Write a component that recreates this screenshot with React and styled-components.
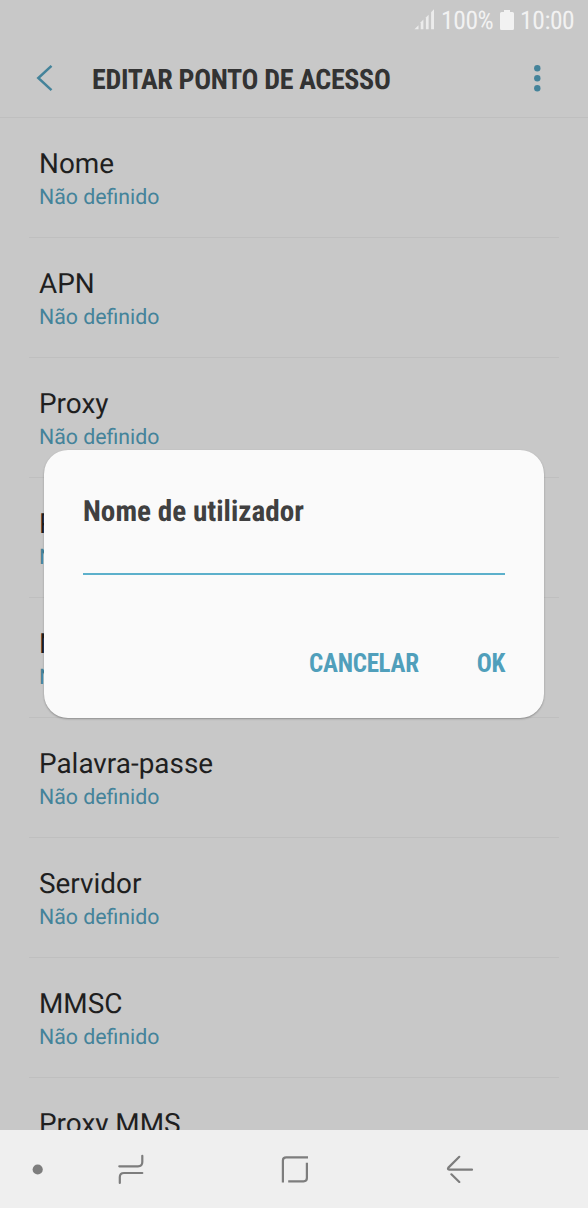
import React from "react";
import styled, { createGlobalStyle, css } from "styled-components";

const colors = {
  dim: "#c8c8c8",
  line: "#bfbfbf",
  teal: "#44839a",
  blue: "#509fbb",
  text: "#1f1f1f",
  nav: "#efefef",
  icon: "#7d7d7d",
};

const GlobalStyle = createGlobalStyle`
  * {
    box-sizing: border-box;
  }

  body {
    margin: 0;
    font-family: Roboto, "Liberation Sans", sans-serif;
    text-rendering: geometricPrecision;
  }
`;

const condensed = css`
  font-family: "Roboto Condensed", Roboto, sans-serif;
  font-stretch: 75%;
  white-space: nowrap;
`;

const Screen = styled.div`
  position: relative;
  display: flex;
  flex-direction: column;
  width: 588px;
  height: 1208px;
  overflow: hidden;
  background: ${colors.dim};
`;

const StatusBar = styled.div`
  ${condensed}
  display: flex;
  justify-content: flex-end;
  align-items: center;
  flex: none;
  height: 40px;
  padding-right: 13px;
  font-size: 25.5px;
  line-height: 40px;
  color: #f2f2f2;

  svg {
    flex: none;
  }
`;

const StatusText = styled.span`
  width: ${(props) => props.$width}px;
  margin-top: 1px;
  margin-left: 6px;
  letter-spacing: ${(props) => props.$spacing}px;
`;

const Header = styled.header`
  display: flex;
  align-items: center;
  flex: none;
  height: 78px;
  padding: 0 45px 0 36px;
  border-bottom: 1px solid ${colors.line};

  svg {
    margin-bottom: 1px;
  }
`;

const Title = styled.h1`
  ${condensed}
  flex: 1;
  margin: 2px 0 0 38px;
  font-size: 28px;
  font-weight: 700;
  line-height: 36px;
  letter-spacing: -0.34px;
  color: #333;
`;

const List = styled.ul`
  flex: 1;
  min-height: 0;
  margin: 0 29px;
  padding: 0;
  overflow: hidden;
  list-style: none;
`;

const Row = styled.li`
  height: 120px;
  padding: 29px 10px 0;
  border-bottom: 1px solid ${colors.line};
`;

const Label = styled.div`
  font-size: 27.9px;
  line-height: 34px;
  color: ${colors.text};
`;

const Value = styled.div`
  font-size: 21.3px;
  line-height: 34px;
  color: ${colors.teal};
`;

const Dialog = styled.div`
  position: absolute;
  top: 450px;
  left: 44px;
  display: flex;
  flex-direction: column;
  width: 500px;
  height: 268px;
  padding: 44px 39px 0;
  border-radius: 24px;
  background: #fafafa;
  box-shadow: 0 1px 2px rgba(0, 0, 0, 0.3);
`;

const DialogTitle = styled.h2`
  ${condensed}
  margin: 0;
  font-size: 29.2px;
  font-weight: 700;
  line-height: 36px;
  color: #404040;
`;

const Input = styled.input`
  width: 422px;
  height: 45px;
  padding: 0;
  border: 0;
  border-bottom: 2px solid #5cb0cb;
  background: transparent;
  font-size: 26px;
  outline: none;
`;

const Actions = styled.div`
  display: flex;
  justify-content: flex-end;
  gap: 58px;
  margin-top: 71px;
`;

const Action = styled.button`
  ${condensed}
  padding: 0;
  border: 0;
  background: none;
  font-size: 25px;
  font-weight: 700;
  line-height: 36px;
  letter-spacing: -0.3px;
  color: ${colors.blue};
`;

const NavBar = styled.nav`
  flex: none;
  height: 78px;
  background: ${colors.nav};

  svg {
    display: block;
  }
`;

const NavItems = styled.div`
  display: flex;
  align-items: center;
  height: 100%;
  padding: 0 114px 0 32px;
`;

const NavSlot = styled.div`
  margin-left: ${(props) => props.$gap}px;
`;

const strokeProps = {
  fill: "none",
  stroke: colors.icon,
  strokeWidth: 2.2,
  strokeLinecap: "round",
  strokeLinejoin: "round",
};

const rows = [
  "Nome",
  "APN",
  "Proxy",
  "Porta",
  "Nome de utilizador",
  "Palavra-passe",
  "Servidor",
  "MMSC",
  "Proxy MMS",
];

const SignalIcon = () => (
  <svg width="21" height="22" viewBox="0 0 21 22" fill="#ececec">
    <path d="M0.5 20.3 L4.5 16.3 V20.3 Z" />
    <path d="M6.7 20.3 V13.3 L9.4 10.6 V20.3 Z" />
    <path d="M11.9 20.3 V8.5 L14.6 5.8 V20.3 Z" />
    <path d="M17.1 20.3 V3.2 L20 0.3 V20.3 Z" />
  </svg>
);

const BatteryIcon = () => (
  <svg width="14" height="20" viewBox="0 0 14 20" fill="#f2f2f2">
    <path d="M4 0 H10 V2 H12.5 Q14 2 14 3.5 V18.5 Q14 20 12.5 20 H1.5 Q0 20 0 18.5 V3.5 Q0 2 1.5 2 H4 Z" />
  </svg>
);

const BackIcon = () => (
  <svg width="18" height="28" viewBox="0 0 18 28">
    <path d="M15.5 1.8 L2.3 14 L15.5 26.2" fill="none" stroke={colors.teal} strokeWidth="2.5" />
  </svg>
);

const MoreIcon = () => (
  <svg width="12" height="28" viewBox="0 0 12 28" fill={colors.teal}>
    <circle cx="6.3" cy="4.3" r="3.2" />
    <circle cx="6.3" cy="14.3" r="3.2" />
    <circle cx="6.3" cy="24.2" r="3.2" />
  </svg>
);

const DotIcon = () => (
  <svg width="12" height="12" viewBox="0 0 12 12">
    <circle cx="5.7" cy="6.5" r="5.1" fill={colors.icon} />
  </svg>
);

const RecentsIcon = () => (
  <svg width="28" height="32" viewBox="0 0 28 32" {...strokeProps}>
    <path d="M2.3 13.3 H21 Q25.3 13.3 25.3 9 V2.8" />
    <path d="M25.3 20 H7 Q2.8 20 2.8 24.3 V30" />
  </svg>
);

const HomeIcon = () => (
  <svg width="28" height="28" viewBox="0 0 28 28" {...strokeProps} strokeLinecap="butt">
    <path d="M1.9 27.6 V5.5 Q1.9 2.3 5.2 2.3 H27" />
    <path d="M25.9 7.8 V23 Q25.9 26.3 22.6 26.3 H7.2" />
  </svg>
);

const ReturnIcon = () => (
  <svg width="28" height="28" viewBox="0 0 28 28" {...strokeProps}>
    <path d="M13.3 1.8 L2.4 12.6 Q1.2 14.3 3.3 14.7 H26" />
    <path d="M5.4 19.3 L13.3 27" />
  </svg>
);

export default function App() {
  return (
    <Screen>
      <GlobalStyle />
      <StatusBar>
        <SignalIcon />
        <StatusText $width={59} $spacing={-0.4}>100%</StatusText>
        <BatteryIcon />
        <StatusText $width={55} $spacing={-0.4}>10:00</StatusText>
      </StatusBar>
      <Header>
        <BackIcon />
        <Title>EDITAR PONTO DE ACESSO</Title>
        <MoreIcon />
      </Header>
      <List>
        {rows.map((label) => (
          <Row key={label}>
            <Label>{label}</Label>
            <Value>Não definido</Value>
          </Row>
        ))}
      </List>
      <NavBar>
        <NavItems>
          <DotIcon />
          <NavSlot $gap={73}>
            <RecentsIcon />
          </NavSlot>
          <NavSlot $gap={136}>
            <HomeIcon />
          </NavSlot>
          <NavSlot $gap={137}>
            <ReturnIcon />
          </NavSlot>
        </NavItems>
      </NavBar>
      <Dialog>
        <DialogTitle>Nome de utilizador</DialogTitle>
        <Input aria-label="Nome de utilizador" />
        <Actions>
          <Action>CANCELAR</Action>
          <Action>OK</Action>
        </Actions>
      </Dialog>
    </Screen>
  );
}
